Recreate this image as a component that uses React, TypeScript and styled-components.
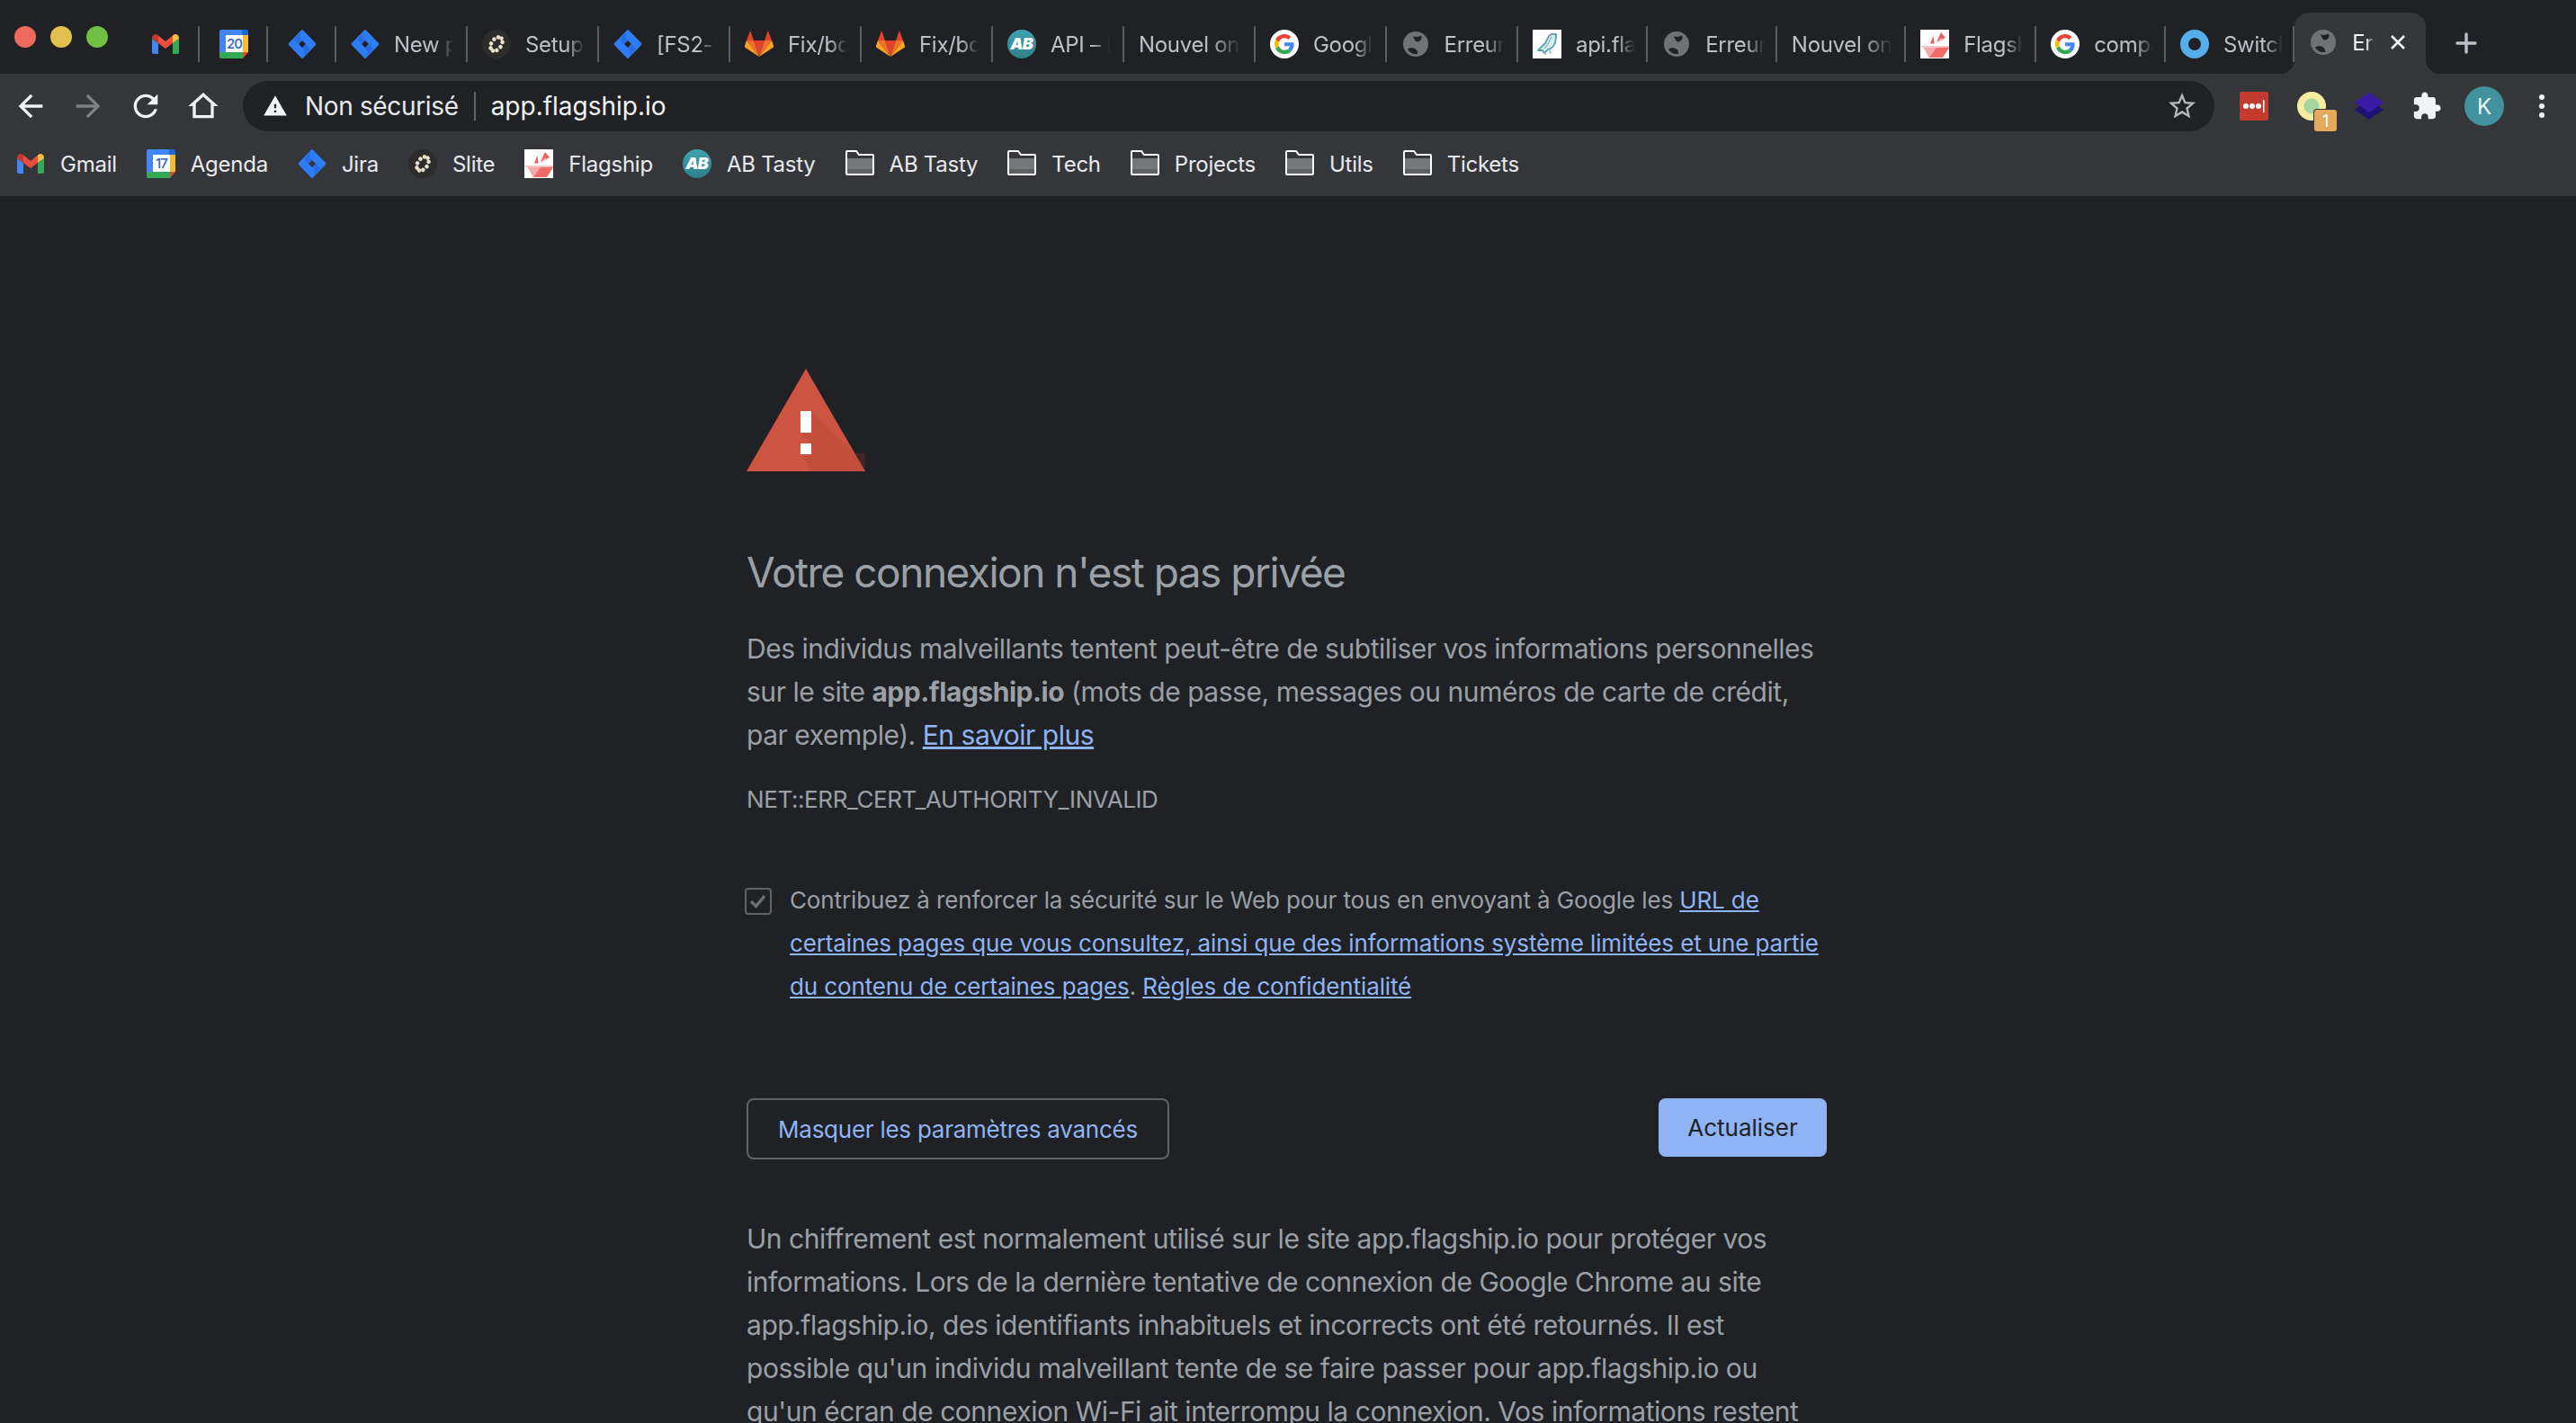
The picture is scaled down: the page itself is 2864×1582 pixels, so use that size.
import { FC, ReactNode } from "react";
import styled, { createGlobalStyle } from "styled-components";

const GlobalStyle = createGlobalStyle`
  html, body {
    margin: 0;
    background: #202124;
    overflow: hidden;
  }
  * {
    box-sizing: border-box;
  }
`;

const FONT = `Inter, "Liberation Sans", sans-serif`;
const LINK_BLUE = "#8fb4f5";

const Window = styled.div`
  display: flex;
  flex-direction: column;
  width: 2864px;
  height: 1582px;
  overflow: hidden;
  font-family: ${FONT};
  background: #202124;
`;

const TabStrip = styled.div`
  display: flex;
  align-items: flex-start;
  flex: none;
  height: 82px;
  padding-top: 29px;
  background: #202124;
`;

const Lights = styled.div`
  display: flex;
  flex: none;
  gap: 16px;
  width: 146px;
  padding-left: 16px;
`;

const Light = styled.span<{ $color: string }>`
  width: 24px;
  height: 24px;
  border-radius: 50%;
  background: ${(p) => p.$color};
`;

const Tab = styled.div<{ $w: number; $pad: number }>`
  display: flex;
  align-items: center;
  flex: none;
  gap: 16px;
  width: ${(p) => p.$w}px;
  height: 40px;
  padding-left: ${(p) => p.$pad}px;
  border-right: 2px solid #5a5c60;
`;

const TabLabel = styled.span<{ $w: number }>`
  width: ${(p) => p.$w}px;
  overflow: hidden;
  white-space: nowrap;
  font-size: 24px;
  letter-spacing: -0.3px;
  color: #bdc1c6;
  mask-image: linear-gradient(90deg, #000 70%, transparent 100%);
`;

const ActiveTab = styled.div`
  display: flex;
  align-items: center;
  flex: none;
  position: relative;
  gap: 16px;
  width: 146px;
  height: 68px;
  margin-top: -15px;
  padding: 2px 0 4px 16px;
  border-radius: 16px 16px 0 0;
  background: #35363a;
  &::before,
  &::after {
    content: "";
    position: absolute;
    bottom: 0;
    width: 16px;
    height: 16px;
    background: radial-gradient(circle at 0 0, transparent 16px, #35363a 16.5px);
  }
  &::before {
    left: -16px;
  }
  &::after {
    right: -16px;
    transform: scaleX(-1);
  }
`;

const ActiveLabel = styled.span`
  width: 26px;
  overflow: hidden;
  white-space: nowrap;
  font-size: 24px;
  letter-spacing: -0.3px;
  color: #f1f3f4;
  mask-image: linear-gradient(90deg, #000 60%, transparent 100%);
`;

const CloseIcon = styled.svg`
  flex: none;
  width: 18px;
  height: 18px;
  stroke: #f1f3f4;
  stroke-width: 2.6;
`;

const NewTab = styled.svg`
  flex: none;
  width: 24px;
  height: 24px;
  margin: 7px 0 0 33px;
  stroke: #bdc1c6;
  stroke-width: 3.4;
  stroke-linecap: round;
`;

const Toolbar = styled.div`
  display: flex;
  align-items: center;
  flex: none;
  height: 64px;
  padding: 8px 0 0 2px;
  background: #35363a;
`;

const ToolButton = styled.div`
  display: flex;
  align-items: center;
  justify-content: center;
  flex: none;
  position: relative;
  width: 64px;
  height: 56px;
`;

const ToolIcon = styled.svg<{ $size?: number; $color?: string }>`
  flex: none;
  width: ${(p) => p.$size ?? 40}px;
  height: ${(p) => p.$size ?? 40}px;
  fill: ${(p) => p.$color ?? "#f1f3f4"};
`;

const AddressBar = styled.div`
  display: flex;
  align-items: center;
  flex: none;
  width: 2192px;
  height: 56px;
  margin: 0 12px;
  padding: 0 18px 0 22px;
  border-radius: 28px;
  background: #202124;
`;

const SecurityLabel = styled.span`
  margin-left: 19px;
  font-size: 28px;
  letter-spacing: -0.35px;
  color: #e8eaed;
`;

const AddressDivider = styled.span`
  width: 2px;
  height: 32px;
  margin: 0 17px;
  background: #5f6368;
`;

const Url = styled.span`
  flex: 1;
  font-size: 28px;
  color: #f1f3f4;
`;

const Badge = styled.span`
  position: absolute;
  left: 35px;
  top: 32px;
  display: flex;
  align-items: center;
  justify-content: center;
  width: 25px;
  height: 24px;
  border-radius: 3px;
  box-shadow: 0 0 0 1px #35363a;
  background: #e3a95c;
  font-size: 19px;
  color: #fff;
`;

const Avatar = styled.span`
  display: flex;
  align-items: center;
  justify-content: center;
  width: 44px;
  height: 44px;
  border-radius: 50%;
  background: #41919f;
  font-size: 24px;
  color: #f1f3f4;
`;

const BookmarkBar = styled.div`
  display: flex;
  align-items: center;
  flex: none;
  gap: 33px;
  height: 72px;
  padding-left: 18px;
  background: #35363a;
`;

const Bookmark = styled.div`
  display: flex;
  align-items: center;
  gap: 17px;
  font-size: 24px;
  letter-spacing: -0.25px;
  color: #e8eaed;
`;

const Favicon = styled.svg`
  display: block;
  flex: none;
  width: 32px;
  height: 32px;
`;

const Content = styled.main`
  flex: 1;
  width: 1201px;
  margin-left: 830px;
  padding-top: 192px;
  color: #9aa0a6;
`;

const WarningIcon = styled.svg`
  display: block;
  width: 132px;
  height: 114px;
`;

const Heading = styled.h1`
  margin: 82px 0 31px;
  font-size: 46px;
  font-weight: 400;
  line-height: 60px;
  letter-spacing: -1.5px;
  color: #9aa0a6;
`;

const Paragraph = styled.p`
  margin: 0;
  font-size: 30px;
  line-height: 48px;
  letter-spacing: -0.47px;
`;

const ErrorCode = styled.div`
  margin-top: 28px;
  font-size: 26px;
  line-height: 40px;
  letter-spacing: -0.4px;
`;

const ReportRow = styled.div`
  display: flex;
  gap: 20px;
  margin: 68px 0 0 -2px;
`;

const CheckBox = styled.span`
  display: flex;
  align-items: center;
  justify-content: center;
  flex: none;
  width: 30px;
  height: 30px;
  margin-top: 10px;
  border: 2px solid #5f6368;
  border-radius: 4px;
`;

const ReportText = styled.div`
  font-size: 26px;
  line-height: 48px;
  letter-spacing: -0.12px;
`;

const Link = styled.a`
  color: ${LINK_BLUE};
  text-decoration: underline;
`;

const ButtonRow = styled.div`
  display: flex;
  align-items: flex-start;
  justify-content: space-between;
  margin: 100px 0 64px;
`;

const OutlineButton = styled.div`
  display: flex;
  align-items: center;
  justify-content: center;
  width: 470px;
  height: 68px;
  border: 2px solid #5f6368;
  border-radius: 8px;
  font-size: 26px;
  letter-spacing: -0.25px;
  color: ${LINK_BLUE};
`;

const PrimaryButton = styled.div`
  display: flex;
  align-items: center;
  justify-content: center;
  width: 187px;
  height: 65px;
  border-radius: 8px;
  background: ${LINK_BLUE};
  font-size: 26px;
  color: #202124;
`;

const Svg: FC<{ children: ReactNode }> = ({ children }) => (
  <Favicon viewBox="0 0 32 32">{children}</Favicon>
);

const GmailIcon = () => (
  <Svg>
    <path d="M1 10l7 5v12H3a2 2 0 0 1-2-2z" fill="#4285f4" />
    <path d="M31 10l-7 5v12h5a2 2 0 0 0 2-2z" fill="#34a853" />
    <path d="M8 6.500 16 13l8-6.500V15l-8 6-8-6z" fill="#ea4f3d" />
    <path d="M1 9.500C1 5.500 5 4 7.500 6L8 6.500V15l-7-5z" fill="#c5392c" />
    <path d="M31 9.500C31 5.500 27 4 24.500 6L24 6.500V15l7-5z" fill="#f4bf3f" />
  </Svg>
);

const CalendarIcon: FC<{ day: string }> = ({ day }) => (
  <Svg>
    <path d="M2 0h23v7H7v19H0V2a2 2 0 0 1 2-2z" fill="#4285f4" />
    <path d="M25 0h5a2 2 0 0 1 2 2v5h-7z" fill="#1f66d1" />
    <rect x="26" y="6" width="6" height="19" fill="#f6bb2e" />
    <path d="M0 25h26v7H2a2 2 0 0 1-2-2z" fill="#34a853" />
    <path d="M26 25h6l-6 7z" fill="#e2483a" />
    <rect x="7" y="6" width="19" height="19" fill="#fff" />
    <text
      x="16.500"
      y="21"
      fontSize="15"
      letterSpacing="-1"
      textAnchor="middle"
      fill="#2b62c4"
      fontFamily={FONT}
      fontWeight="500"
    >
      {day}
    </text>
  </Svg>
);

const JiraIcon = () => (
  <Svg>
    <path
      fillRule="evenodd"
      d="M14.500 1a2 2 0 0 1 3 0l13 13.500a2 2 0 0 1 0 3l-13 13.500a2 2 0 0 1-3 0L1.500 17.500a2 2 0 0 1 0-3zM16 12l-4 4 4 4 4-4z"
      fill="#2f7df6"
    />
    <path d="M16 0c-3.500 3.500-3.500 8.500 0 12l-4 4-5-5z" fill="#2464d8" opacity=".7" />
    <path d="M16 32c3.500-3.500 3.500-8.500 0-12l4-4 5 5z" fill="#2464d8" opacity=".7" />
  </Svg>
);

const BEAD_ANGLES = [0, 40, 80, 120, 160, 200, 240, 280, 320];

const SliteIcon = () => (
  <Svg>
    <circle cx="16" cy="16" r="16" fill="#2c2c2a" />
    <g transform="rotate(35 16 16)">
      {BEAD_ANGLES.map((a) => (
        <circle
          key={a}
          cx={16 + 5.5 * Math.cos((a * Math.PI) / 180)}
          cy={16 + 8.5 * Math.sin((a * Math.PI) / 180)}
          r="2.300"
          fill="#e9e0cc"
        />
      ))}
    </g>
  </Svg>
);

const GitlabIcon = () => (
  <Svg>
    <path d="M16 30 22 12H10z" fill="#e24329" />
    <path d="M16 30 10 12H2z" fill="#f2702a" />
    <path d="M16 30 22 12h8z" fill="#f2702a" />
    <path d="M2 12 0 18c-.200.800 0 1.500.700 2L16 30z" fill="#fca326" />
    <path d="M30 12l2 6c.200.800 0 1.500-.700 2L16 30z" fill="#fca326" />
    <path d="M2 12h8L6.200 1z" fill="#e24329" />
    <path d="M30 12h-8l3.800-11z" fill="#e24329" />
  </Svg>
);

const AbTastyIcon = () => (
  <Svg>
    <defs>
      <linearGradient id="abFill" x1="0" y1="0" x2="0" y2="1">
        <stop offset="0" stopColor="#3fa3b2" />
        <stop offset="1" stopColor="#2f7f88" />
      </linearGradient>
    </defs>
    <circle cx="16" cy="16" r="16" fill="url(#abFill)" />
    <text
      x="15.500"
      y="22"
      fontSize="18"
      fontWeight="900"
      fontStyle="italic"
      letterSpacing="-1"
      textAnchor="middle"
      fill="#fff"
      fontFamily={FONT}
    >
      AB
    </text>
  </Svg>
);

const GoogleIcon = () => (
  <Svg>
    <circle cx="16" cy="16" r="16" fill="#fff" />
    <g transform="translate(5 5) scale(.46)">
      <path fill="#EA4335" d="M24 9.500c3.540 0 6.710 1.220 9.210 3.600l6.850-6.850C35.900 2.380 30.470 0 24 0 14.620 0 6.510 5.380 2.560 13.220l7.980 6.190C12.430 13.720 17.740 9.500 24 9.500z" />
      <path fill="#4285F4" d="M46.980 24.550c0-1.570-.150-3.090-.380-4.550H24v9.020h12.940c-.580 2.960-2.260 5.480-4.780 7.180l7.730 6c4.510-4.180 7.090-10.360 7.090-17.650z" />
      <path fill="#FBBC05" d="M10.530 28.590c-.480-1.450-.760-2.990-.760-4.590s.270-3.140.760-4.590l-7.980-6.190C.920 16.460 0 20.120 0 24c0 3.880.920 7.540 2.560 10.780l7.970-6.190z" />
      <path fill="#34A853" d="M24 48c6.480 0 11.930-2.130 15.890-5.810l-7.730-6c-2.150 1.450-4.920 2.300-8.160 2.300-6.260 0-11.570-4.220-13.470-9.910l-7.980 6.190C6.510 42.620 14.620 48 24 48z" />
    </g>
  </Svg>
);

const GlobeIcon = () => (
  <Svg>
    <circle cx="16" cy="16" r="14" fill="#707275" />
    <path
      d="M13 7C16 8.500 19 8 22 6.500 23.500 9 22 12.500 18.500 13.500 16 14 14.500 11 13 7zM7 21.500C10 19.500 13 20 15 21 17 22 18.500 24 18 27 13.500 27.500 9 25.500 7 21.500z"
      fill="#202124"
    />
  </Svg>
);

const BirdIcon = () => (
  <Svg>
    <rect width="32" height="32" fill="#fff" />
    <path
      d="M24 5c-3-1-6 1-7 4l-3 6-8 8 5 0 2 3 4-4c4-1 7-4 8-8l1-5 0-4z"
      fill="#dcecef"
      stroke="#5aa3b0"
      strokeWidth="1.800"
      strokeLinejoin="round"
    />
    <path d="M21 8l-4 8-4 5M14 26l0 2M19 22l1 5" fill="none" stroke="#8cc0ca" strokeWidth="1.500" />
  </Svg>
);

const FlagshipIcon = () => (
  <Svg>
    <rect width="32" height="32" fill="#fff" />
    <path d="M11 15.500 14.500 7l1 8.500z" fill="#ee5b5b" />
    <path d="M18 14 23 3l5 6z" fill="#ee5b5b" />
    <path d="M18 14 23 9l3 2z" fill="#f7a0a0" />
    <rect x="1" y="18" width="31" height="2" fill="#f8c4c4" />
    <path d="M4 20h28l-7 11H10z" fill="#f16a6a" />
    <path d="M4 20h14l-8 11z" fill="#f7a8a8" />
  </Svg>
);

const RingIcon = () => (
  <Svg>
    <circle cx="16" cy="16" r="11.500" fill="none" stroke="#55aeea" strokeWidth="9" />
  </Svg>
);

const FolderIcon = () => (
  <Svg>
    <path
      d="M1 5V3a1 1 0 0 1 1-1h10l3 4h15a1 1 0 0 1 1 1v20a1 1 0 0 1-1 1H2a1 1 0 0 1-1-1z"
      fill="#35363a"
      stroke="#fff"
      strokeWidth="2"
    />
    <rect x="2" y="10" width="28" height="17" fill="#76777a" />
    <rect x="2" y="22" width="28" height="5" fill="#606164" />
  </Svg>
);

type TabItem = { icon?: ReactNode; label?: string; width: number; textWidth?: number };

const TABS: TabItem[] = [
  { icon: <GmailIcon />, width: 76 },
  { icon: <CalendarIcon day="20" />, width: 76 },
  { icon: <JiraIcon />, width: 76 },
  { icon: <JiraIcon />, label: "New page", width: 146, textWidth: 66 },
  { icon: <SliteIcon />, label: "Setup the", width: 146, textWidth: 66 },
  { icon: <JiraIcon />, label: "[FS2-507]", width: 146, textWidth: 66 },
  { icon: <GitlabIcon />, label: "Fix/bdd", width: 146, textWidth: 66 },
  { icon: <GitlabIcon />, label: "Fix/bdd", width: 146, textWidth: 66 },
  { icon: <AbTastyIcon />, label: "API – Intro", width: 146, textWidth: 66 },
  { label: "Nouvel onglet", width: 146, textWidth: 114 },
  { icon: <GoogleIcon />, label: "Google", width: 145.6, textWidth: 66 },
  { icon: <GlobeIcon />, label: "Erreur de", width: 146.4, textWidth: 66 },
  { icon: <BirdIcon />, label: "api.flagship", width: 144.2, textWidth: 66 },
  { icon: <GlobeIcon />, label: "Erreur de", width: 143.7, textWidth: 66 },
  { label: "Nouvel onglet", width: 143.3, textWidth: 112 },
  { icon: <FlagshipIcon />, label: "Flagship", width: 145, textWidth: 66 },
  { icon: <GoogleIcon />, label: "compare", width: 143.8, textWidth: 66 },
  { icon: <RingIcon />, label: "Switch", width: 143.2, textWidth: 66 },
];

const BOOKMARKS: { icon: ReactNode; label: string }[] = [
  { icon: <GmailIcon />, label: "Gmail" },
  { icon: <CalendarIcon day="17" />, label: "Agenda" },
  { icon: <JiraIcon />, label: "Jira" },
  { icon: <SliteIcon />, label: "Slite" },
  { icon: <FlagshipIcon />, label: "Flagship" },
  { icon: <AbTastyIcon />, label: "AB Tasty" },
  { icon: <FolderIcon />, label: "AB Tasty" },
  { icon: <FolderIcon />, label: "Tech" },
  { icon: <FolderIcon />, label: "Projects" },
  { icon: <FolderIcon />, label: "Utils" },
  { icon: <FolderIcon />, label: "Tickets" },
];

const App = () => (
  <Window>
    <GlobalStyle />
    <TabStrip>
      <Lights>
        <Light $color="#ee6a5f" />
        <Light $color="#e3c04e" />
        <Light $color="#72bf44" />
      </Lights>
      {TABS.map((tab, i) => (
        <Tab key={i} $w={tab.width} $pad={tab.label ? 16 : 22}>
          {tab.icon}
          {tab.label && <TabLabel $w={tab.textWidth ?? 66}>{tab.label}</TabLabel>}
        </Tab>
      ))}
      <ActiveTab>
        <GlobeIcon />
        <ActiveLabel>Erreur</ActiveLabel>
        <CloseIcon viewBox="0 0 18 18">
          <path d="M2 2l14 14M16 2 2 16" />
        </CloseIcon>
      </ActiveTab>
      <NewTab viewBox="0 0 24 24">
        <path d="M12 2v20M2 12h20" />
      </NewTab>
    </TabStrip>

    <Toolbar>
      <ToolButton>
        <ToolIcon viewBox="0 0 24 24">
          <path d="M20 11H7.830l5.590-5.590L12 4l-8 8 8 8 1.410-1.410L7.830 13H20v-2z" />
        </ToolIcon>
      </ToolButton>
      <ToolButton>
        <ToolIcon viewBox="0 0 24 24" $color="#7f8083">
          <path d="M4 11h12.170l-5.590-5.590L12 4l8 8-8 8-1.410-1.410L16.170 13H4v-2z" />
        </ToolIcon>
      </ToolButton>
      <ToolButton>
        <ToolIcon viewBox="0 0 24 24">
          <path d="M17.650 6.350C16.200 4.900 14.210 4 12 4c-4.420 0-7.990 3.580-7.990 8s3.570 8 7.990 8c3.730 0 6.840-2.550 7.730-6h-2.080c-.820 2.330-3.040 4-5.650 4-3.310 0-6-2.690-6-6s2.690-6 6-6c1.660 0 3.140.690 4.220 1.780L13 11h7V4l-2.350 2.350z" />
        </ToolIcon>
      </ToolButton>
      <ToolButton>
        <ToolIcon viewBox="0 0 24 24">
          <path d="M12 5.690l5 4.500V18H7v-7.810l5-4.500M12 3 2 12h3v8h14v-8h3L12 3z" />
        </ToolIcon>
      </ToolButton>
      <AddressBar>
        <ToolIcon viewBox="0 0 24 24" $size={28}>
          <path d="M1 21h22L12 2 1 21zm12-3h-2v-2h2v2zm0-4h-2v-4h2v4z" />
        </ToolIcon>
        <SecurityLabel>Non sécurisé</SecurityLabel>
        <AddressDivider />
        <Url>app.flagship.io</Url>
        <ToolIcon viewBox="0 0 24 24" $size={36} $color="#b4b6b9">
          <path d="M22 9.240l-7.190-.620L12 2 9.190 8.630 2 9.240l5.460 4.730L5.820 21 12 17.270 18.180 21l-1.630-7.030L22 9.240zM12 15.400l-3.760 2.270 1-4.280-3.320-2.880 4.380-.380L12 6.100l1.710 4.040 4.380.380-3.320 2.880 1 4.280L12 15.400z" />
        </ToolIcon>
      </AddressBar>
      <ToolButton>
        <Favicon viewBox="0 0 32 32">
          <rect width="32" height="32" rx="2" fill="#c33a2f" />
          <circle cx="7" cy="16" r="3" fill="#fff" />
          <circle cx="14" cy="16" r="3" fill="#fff" />
          <circle cx="21" cy="16" r="3" fill="#fff" />
          <rect x="26" y="9" width="1.500" height="14" fill="#fff" />
        </Favicon>
      </ToolButton>
      <ToolButton>
        <Favicon viewBox="0 0 32 32">
          <circle cx="16" cy="16" r="16" fill="#f8eca3" />
          <circle cx="16" cy="16" r="8.500" fill="#a5d6a0" />
        </Favicon>
        <Badge>1</Badge>
      </ToolButton>
      <ToolButton>
        <Favicon viewBox="0 0 32 32">
          <path d="M16 9 32 20 16 31 0 20z" fill="#1c1470" />
          <path d="M16 1 32 12 16 23 0 12z" fill="#3a1aa8" />
        </Favicon>
      </ToolButton>
      <ToolButton>
        <ToolIcon viewBox="0 0 24 24" $size={34}>
          <path d="M20.500 11H19V7c0-1.100-.900-2-2-2h-4V3.500C13 2.120 11.880 1 10.500 1S8 2.120 8 3.500V5H4c-1.100 0-1.990.900-1.990 2v3.800H3.500c1.490 0 2.700 1.210 2.700 2.700s-1.210 2.700-2.700 2.700H2V20c0 1.100.900 2 2 2h3.800v-1.500c0-1.490 1.210-2.700 2.700-2.700 1.490 0 2.700 1.210 2.700 2.700V22H17c1.100 0 2-.900 2-2v-4h1.500c1.380 0 2.500-1.120 2.500-2.500S21.880 11 20.500 11z" />
        </ToolIcon>
      </ToolButton>
      <ToolButton>
        <Avatar>K</Avatar>
      </ToolButton>
      <ToolButton>
        <ToolIcon viewBox="0 0 8 28" $size={28}>
          <circle cx="4" cy="4" r="3" />
          <circle cx="4" cy="14" r="3" />
          <circle cx="4" cy="24" r="3" />
        </ToolIcon>
      </ToolButton>
    </Toolbar>

    <BookmarkBar>
      {BOOKMARKS.map((b, i) => (
        <Bookmark key={i}>
          {b.icon}
          {b.label}
        </Bookmark>
      ))}
    </BookmarkBar>

    <Content>
      <WarningIcon viewBox="0 0 132 114">
        <path d="M66 0 132 114H0z" fill="#ce5442" />
        <path d="M72 47 120 94H132L132 114H72L60 95V83l12 12V83L60 71z" fill="#a93c2c" opacity=".25" />
        <rect x="60" y="47" width="12" height="24" fill="#fff" />
        <rect x="60" y="83" width="12" height="12" fill="#fff" />
      </WarningIcon>
      <Heading>Votre connexion n'est pas privée</Heading>
      <Paragraph>
        Des individus malveillants tentent peut-être de subtiliser vos informations personnelles
        sur le site <b>app.flagship.io</b> (mots de passe, messages ou numéros de carte de crédit,
        par exemple). <Link>En savoir plus</Link>
      </Paragraph>
      <ErrorCode>NET::ERR_CERT_AUTHORITY_INVALID</ErrorCode>
      <ReportRow>
        <CheckBox>
          <svg width="26" height="26" viewBox="0 0 26 26" fill="none" stroke="#6b6e72" strokeWidth="3.500">
            <path d="M5 13l5.500 5.500L20 7" />
          </svg>
        </CheckBox>
        <ReportText>
          Contribuez à renforcer la sécurité sur le Web pour tous en envoyant à Google les{" "}
          <Link>
            URL de certaines pages que vous consultez, ainsi que des informations système limitées
            et une partie du contenu de certaines pages
          </Link>
          . <Link>Règles de confidentialité</Link>
        </ReportText>
      </ReportRow>
      <ButtonRow>
        <OutlineButton>Masquer les paramètres avancés</OutlineButton>
        <PrimaryButton>Actualiser</PrimaryButton>
      </ButtonRow>
      <Paragraph>
        Un chiffrement est normalement utilisé sur le site app.flagship.io pour protéger vos
        <br />
        informations. Lors de la dernière tentative de connexion de Google Chrome au site
        <br />
        app.flagship.io, des identifiants inhabituels et incorrects ont été retournés. Il est
        <br />
        possible qu'un individu malveillant tente de se faire passer pour app.flagship.io ou
        <br />
        qu'un écran de connexion Wi-Fi ait interrompu la connexion. Vos informations restent
      </Paragraph>
    </Content>
  </Window>
);

export default App;
